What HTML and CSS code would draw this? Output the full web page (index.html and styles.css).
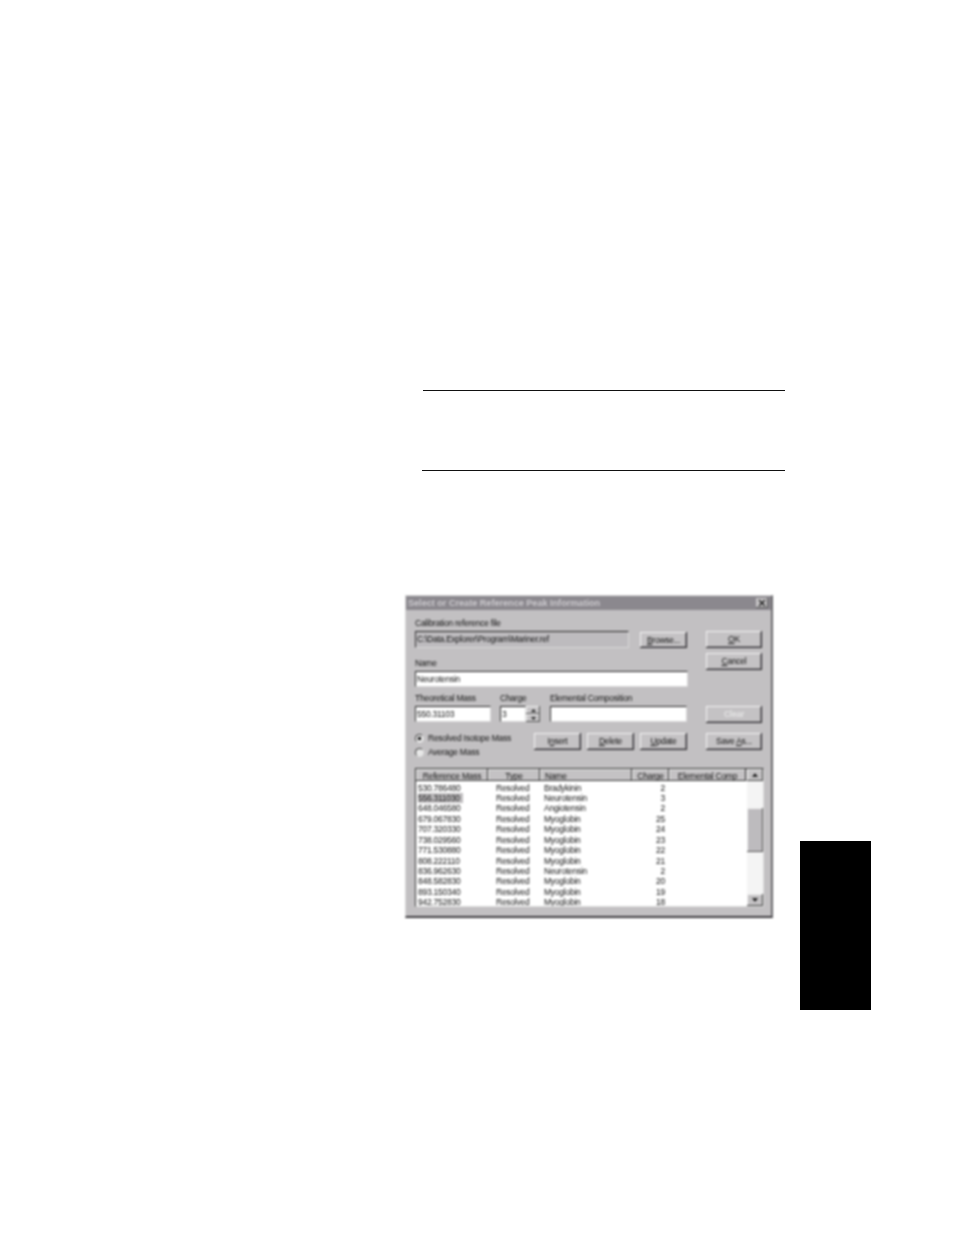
FILE: index.html
```html
<!DOCTYPE html>
<html lang="en">
<head>
<meta charset="utf-8">
<title>Select or Create Reference Peak Information</title>
<link rel="stylesheet" href="styles.css">
</head>
<body>
<main class="page">
  <div class="note">
    <hr class="rule">
    <div class="note-space"></div>
    <hr class="rule rule-long">
  </div>
  <section class="dialog">
    <header class="titlebar">
      <span class="title">Select or Create Reference Peak Information</span>
      <span class="close"><svg viewBox="0 0 8 8" width="8" height="8"><path d="M1 1L7 7M7 1L1 7" stroke="#222" stroke-width="1.5"/></svg></span>
    </header>
    <div class="body">
      <div class="upper">
        <div class="form">
          <div class="label">Calibration reference file</div>
          <div class="line">
            <div class="field field-file">C:\Data.Explorer\Program\Mariner.ref</div>
            <button class="btn btn-browse"><u>B</u>rowse...</button>
          </div>
          <div class="label label-name">Name</div>
          <div class="field field-name">Neurotensin</div>
          <div class="triple label-triple">
            <div class="label col-mass">Theoretical Mass</div>
            <div class="label col-charge">Charge</div>
            <div class="label col-comp">Elemental Composition</div>
          </div>
          <div class="triple">
            <div class="field col-mass">550.31103</div>
            <div class="charge col-charge">
              <div class="field field-charge">3</div>
              <div class="spin">
                <span class="spin-btn"><svg viewBox="0 0 7 4" width="7" height="4"><path d="M3.5 0L7 4H0Z" fill="#222"/></svg></span>
                <span class="spin-btn"><svg viewBox="0 0 7 4" width="7" height="4"><path d="M0 0H7L3.500 4Z" fill="#222"/></svg></span>
              </div>
            </div>
            <div class="field col-comp"></div>
          </div>
          <div class="actions">
            <div class="radios">
              <div class="radio-row"><span class="radio checked"></span>Resolved Isotope Mass</div>
              <div class="radio-row"><span class="radio"></span>Average Mass</div>
            </div>
            <div class="action-btns">
              <button class="btn btn-action">I<u>n</u>sert</button>
              <button class="btn btn-action"><u>D</u>elete</button>
              <button class="btn btn-action"><u>U</u>pdate</button>
            </div>
          </div>
        </div>
        <div class="side">
          <button class="btn btn-side"><u>O</u>K</button>
          <button class="btn btn-side btn-cancel"><u>C</u>ancel</button>
          <button class="btn btn-side btn-clear" disabled>Clear</button>
          <button class="btn btn-side btn-save">Save <u>A</u>s...</button>
        </div>
      </div>
      <div class="list">
        <div class="list-main">
          <div class="list-head">
            <span class="th th-mass">Reference Mass</span>
            <span class="th th-type">Type</span>
            <span class="th th-name">Name</span>
            <span class="th th-charge">Charge</span>
            <span class="th th-comp">Elemental Comp</span>
          </div>
          <div class="rows">
            <div class="row"><span class="c-mass">530.786480</span><span class="c-type">Resolved</span><span class="c-name">Bradykinin</span><span class="c-charge">2</span></div>
            <div class="row"><span class="c-mass"><span class="selected">556.311030</span></span><span class="c-type">Resolved</span><span class="c-name">Neurotensin</span><span class="c-charge">3</span></div>
            <div class="row"><span class="c-mass">648.046580</span><span class="c-type">Resolved</span><span class="c-name">Angiotensin</span><span class="c-charge">2</span></div>
            <div class="row"><span class="c-mass">679.067830</span><span class="c-type">Resolved</span><span class="c-name">Myoglobin</span><span class="c-charge">25</span></div>
            <div class="row"><span class="c-mass">707.320330</span><span class="c-type">Resolved</span><span class="c-name">Myoglobin</span><span class="c-charge">24</span></div>
            <div class="row"><span class="c-mass">738.029560</span><span class="c-type">Resolved</span><span class="c-name">Myoglobin</span><span class="c-charge">23</span></div>
            <div class="row"><span class="c-mass">771.530880</span><span class="c-type">Resolved</span><span class="c-name">Myoglobin</span><span class="c-charge">22</span></div>
            <div class="row"><span class="c-mass">808.222110</span><span class="c-type">Resolved</span><span class="c-name">Myoglobin</span><span class="c-charge">21</span></div>
            <div class="row"><span class="c-mass">836.962630</span><span class="c-type">Resolved</span><span class="c-name">Neurotensin</span><span class="c-charge">2</span></div>
            <div class="row"><span class="c-mass">848.582830</span><span class="c-type">Resolved</span><span class="c-name">Myoglobin</span><span class="c-charge">20</span></div>
            <div class="row"><span class="c-mass">893.150340</span><span class="c-type">Resolved</span><span class="c-name">Myoglobin</span><span class="c-charge">19</span></div>
            <div class="row"><span class="c-mass">942.752830</span><span class="c-type">Resolved</span><span class="c-name">Myoglobin</span><span class="c-charge">18</span></div>
          </div>
        </div>
        <div class="scrollbar">
          <span class="sb-btn"><svg viewBox="0 0 7 4" width="7" height="4"><path d="M3.500 0L7 4H0Z" fill="#111"/></svg></span>
          <div class="sb-track"><div class="sb-thumb"></div></div>
          <span class="sb-btn"><svg viewBox="0 0 7 4" width="7" height="4"><path d="M0 0H7L3.500 4Z" fill="#111"/></svg></span>
        </div>
      </div>
    </div>
  </section>
  <div class="tab"></div>
</main>
</body>
</html>
```
FILE: styles.css
```css
* { box-sizing: border-box; }
html, body { margin: 0; padding: 0; background: #fff; }
.page {
  position: relative;
  width: 954px;
  height: 1235px;
  overflow: hidden;
  padding-top: 390px;
  font-family: "Liberation Sans", Arial, sans-serif;
}
.note { margin-left: 423px; width: 362px; }
.rule { margin: 0; border: 0; height: 1px; background: #111; }
.rule-long { margin-left: -1px; width: 363px; }
.note-space { height: 79px; }

.tab {
  position: absolute;
  left: 800px;
  top: 841px;
  width: 71px;
  height: 169px;
  background: #000;
}

.dialog {
  width: 368px;
  height: 323px;
  margin: 124px 0 0 405px;
  background: #c2c0c2;
  border: 1px solid #d8d8d8;
  border-right: 2px solid #6a686c;
  border-bottom: 2px solid #3c3a3e;
  color: #111;
  font-size: 8.500px;
  letter-spacing: -0.25px;
  filter: blur(0.8px);
}
.titlebar {
  height: 14px;
  display: flex;
  align-items: center;
  justify-content: space-between;
  padding: 0 3px 0 2px;
  background: #8b888e;
  color: #cccace;
  font-weight: bold;
  font-size: 9.100px;
  letter-spacing: 0;
}
.close {
  width: 12px;
  height: 10px;
  display: flex;
  align-items: center;
  justify-content: center;
  background: #c6c4c6;
  box-shadow: inset -1px -1px 0 #555;
}
.body { padding: 7px 9px 0 9px; }
.upper { display: flex; }
.form { width: 273px; }
.side {
  width: 57px;
  margin-left: 18px;
  padding-top: 14px;
  display: flex;
  flex-direction: column;
}
.label { height: 14px; line-height: 12px; white-space: nowrap; }
.label-name { margin-top: 9px; }
.line { display: flex; justify-content: space-between; height: 17px; }
.field {
  height: 16px;
  line-height: 14px;
  padding-left: 1px;
  background: #fff;
  border-top: 1px solid #222;
  border-left: 1px solid #333;
  border-right: 1px solid #d8d8d8;
  border-bottom: 1px solid #d8d8d8;
  white-space: nowrap;
  overflow: hidden;
}
.field-file { width: 214px; height: 17px; background: #bdbbbe; }
.field-name { width: 273px; }
.triple { display: flex; }
.label-triple { margin-top: 5px; }
.col-mass { width: 76px; }
.col-charge { width: 40px; margin-left: 9px; }
.col-comp { width: 137px; margin-left: 10px; }
.charge { display: flex; }
.field-charge { width: 26px; }
.spin { width: 14px; height: 16px; display: flex; flex-direction: column; }
.spin-btn {
  flex: 1;
  display: flex;
  align-items: center;
  justify-content: center;
  background: #c6c4c6;
  box-shadow: inset -1px -1px 0 #555, inset 1px 1px 0 #eee;
}
.spin-btn svg { width: 5px; height: 3px; }
.btn {
  display: block;
  padding: 0 0 1px;
  font: inherit;
  letter-spacing: inherit;
  color: #111;
  background: #c4c2c4;
  border: 0;
  box-shadow: inset -1px -1px 0 #2a282c, inset 1px 1px 0 #f4f4f4, inset -2px -2px 0 #8a888c;
  text-align: center;
}
.btn u { text-decoration: underline; }
.btn-browse { width: 47px; height: 16px; margin: 1px 1px 0 0; }
.btn-side { width: 56px; height: 17px; }
.btn-cancel { margin-top: 5px; }
.btn-clear { margin-top: 36px; color: #e4e4e4; font-weight: bold; }
.btn-save { margin-top: 10px; }
.actions { display: flex; justify-content: space-between; margin-top: 9px; }
.radio-row { height: 14px; display: flex; align-items: center; white-space: nowrap; }
.radio {
  width: 9px;
  height: 9px;
  margin-right: 4px;
  border-radius: 50%;
  background: #e8e8e8;
  border: 1px solid #444;
  border-right-color: #ddd;
  border-bottom-color: #ddd;
}
.radio.checked { background: radial-gradient(circle, #111 0 1.500px, #e8e8e8 2px); }
.action-btns { display: flex; gap: 6px; padding: 2px 1px 0 0; }
.btn-action { width: 47px; height: 17px; }

.list {
  display: flex;
  width: 349px;
  height: 139px;
  margin-top: 9px;
  background: #fff;
  border-top: 1px solid #333;
  border-left: 1px solid #333;
  border-right: 1px solid #ddd;
  border-bottom: 1px solid #ddd;
}
.list-main { flex: 1; min-width: 0; height: 100%; overflow: hidden; }
.list-head { display: flex; height: 12px; line-height: 14px; background: #c4c2c4; }
.th {
  display: block;
  text-align: center;
  white-space: nowrap;
  overflow: hidden;
  box-shadow: inset -1px -1px 0 #333, inset 1px 1px 0 #eee;
}
.th-mass { width: 72px; }
.th-type { width: 52px; }
.th-name { width: 92px; text-align: left; padding-left: 5px; }
.th-charge { width: 37px; }
.th-comp { width: 77px; }
.rows { padding-top: 1.500px; }
.row { display: flex; height: 10.450px; line-height: 10.450px; white-space: nowrap; }
.c-mass { width: 80px; padding-left: 2px; }
.c-type { width: 48px; }
.c-name { width: 100px; }
.c-charge { width: 21px; text-align: right; }
.selected { background: #bebcbe; padding: 0 3px 0 0; display: inline-block; }
.scrollbar {
  width: 16px;
  display: flex;
  flex-direction: column;
  background: #f4f4f4;
}
.sb-btn {
  height: 12px;
  display: flex;
  align-items: center;
  justify-content: center;
  background: #c4c2c4;
  box-shadow: inset -1px -1px 0 #444, inset 1px 1px 0 #eee;
}
.sb-btn svg { width: 6px; height: 4px; }
.sb-track { flex: 1; padding-top: 27px; }
.sb-thumb {
  height: 44px;
  background: #bdbbbe;
  box-shadow: inset -1px -1px 0 #555, inset 1px 1px 0 #eee;
}
```
